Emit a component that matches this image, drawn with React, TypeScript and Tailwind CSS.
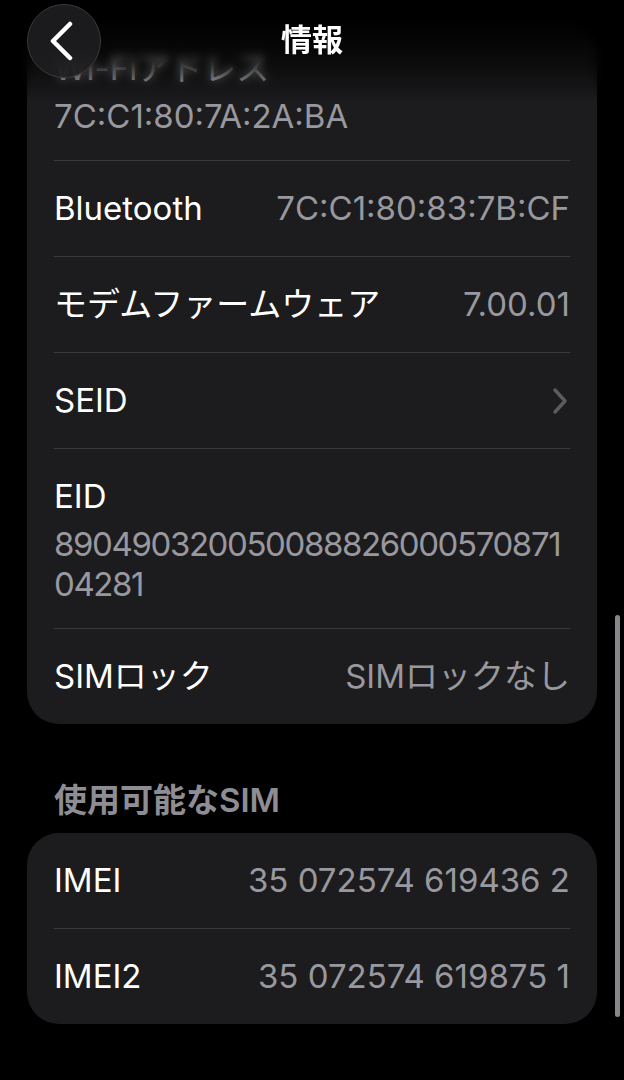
type Item = {
  label: string;
  value?: string;
  lines?: string[];
  chevron?: boolean;
  stacked?: boolean;
  tight?: boolean;
};

const DEVICE: Item[] = [
  { label: "Wi-Fiアドレス", lines: ["7C:C1:80:7A:2A:BA"], stacked: true },
  { label: "Bluetooth", value: "7C:C1:80:83:7B:CF" },
  { label: "モデムファームウェア", value: "7.00.01" },
  { label: "SEID", chevron: true },
  { label: "EID", lines: ["890490320050088826000570871", "04281"], stacked: true, tight: true },
  { label: "SIMロック", value: "SIMロックなし" },
];

const SIMS: Item[] = [
  { label: "IMEI", value: "35 072574 619436 2" },
  { label: "IMEI2", value: "35 072574 619875 1" },
];

const font = "font-['Inter','Noto_Sans_CJK_JP',sans-serif]";

function Chevron({ className }: { className?: string }) {
  return (
    <svg width="18" height="28" viewBox="0 0 18 28" fill="none" stroke="currentColor" strokeWidth="3.4" strokeLinecap="round" strokeLinejoin="round" className={className} aria-hidden="true">
      <path d="M4 3l10 11L4 25" />
    </svg>
  );
}

function Row({ item, first }: { item: Item; first: boolean }) {
  const sep = first ? "" : "border-t border-[#38383a]";
  if (item.stacked) {
    return (
      <div className={`${sep} pt-[27px] pb-[24px]`}>
        <div className="text-[33px] leading-[40px] text-white">{item.label}</div>
        <div className={`mt-2 text-[33px] leading-[40px] text-[#98989e] whitespace-nowrap ${item.tight ? "tracking-[-1.4px]" : ""}`}>
          {item.lines?.map((l) => (
            <div key={l}>{l}</div>
          ))}
        </div>
      </div>
    );
  }
  return (
    <div className={`${sep} ${first ? "h-[95px]" : "h-[96px]"} flex items-center justify-between`}>
      <span className="text-[33px] text-white whitespace-nowrap">{item.label}</span>
      {item.chevron ? (
        <Chevron className="text-[#5c5c60] mr-[1px]" />
      ) : (
        <span className="text-[33px] text-[#98989e] whitespace-nowrap">{item.value}</span>
      )}
    </div>
  );
}

function Card({ items }: { items: Item[] }) {
  return (
    <div className="rounded-[32px] bg-[#1c1c1e] px-[27px]">
      {items.map((it, i) => (
        <Row key={it.label} item={it} first={i === 0} />
      ))}
    </div>
  );
}

export default function App() {
  return (
    <div className={`relative h-[1080px] overflow-hidden bg-black ${font}`}>
      <main className="px-[27px] pt-[21px]">
        <Card items={DEVICE} />
        <h2 className="mt-[57px] mb-[14px] px-[27px] text-[33px] leading-[38px] font-semibold text-[#8d8d93]">
          使用可能なSIM
        </h2>
        <Card items={SIMS} />
      </main>

      {/* nav bar fade */}
      <div className="pointer-events-none absolute inset-x-0 top-0 h-[100px] backdrop-blur-[5px] [mask-image:linear-gradient(to_bottom,black_60%,transparent)]" />
      <div className="pointer-events-none absolute inset-x-0 top-0 h-[100px] bg-[linear-gradient(to_bottom,rgba(0,0,0,1)_0%,rgba(0,0,0,0.88)_35%,rgba(0,0,0,0.55)_65%,rgba(0,0,0,0)_100%)]" />

      <button className="absolute left-[27px] top-[4px] flex h-[74px] w-[74px] items-center justify-center rounded-full border border-[#3a3a3c] bg-[#1e1e20]/90 text-white">
        <svg width="30" height="40" viewBox="0 0 30 40" fill="none" stroke="currentColor" strokeWidth="4.5" strokeLinecap="round" strokeLinejoin="round" aria-hidden="true">
          <path d="M21 3L4 20l17 17" />
        </svg>
      </button>
      <div className="absolute inset-x-0 top-0 flex h-[80px] items-center justify-center text-[31px] font-bold text-white">
        情報
      </div>

      {/* scroll indicator */}
      <div className="absolute right-[4px] top-[615px] h-[402px] w-[5px] rounded-full bg-[#88888c]" />
    </div>
  );
}
